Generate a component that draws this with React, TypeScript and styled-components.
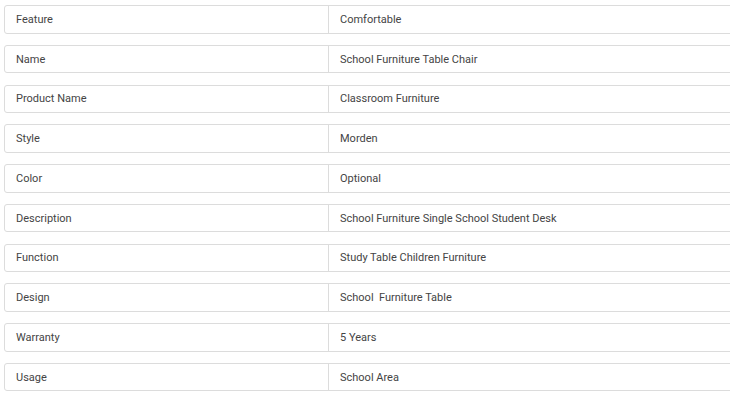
import React from "react";
import styled, { createGlobalStyle } from "styled-components";

const Global = createGlobalStyle`
  html, body { margin: 0; padding: 0; background: #fff; overflow: hidden; }
  body { font-family: Roboto, "Liberation Sans", sans-serif; }
`;

const List = styled.div`
  display: flex;
  flex-direction: column;
  gap: 11.28px;
  padding: 5px 0 0 4px;
  width: 760px;
`;

const Row = styled.div`
  display: grid;
  grid-template-columns: 323px 1fr;
  height: 28.5px;
  box-sizing: border-box;
  border: 1px solid #dcdcdc;
  border-radius: 3px;
`;

const Cell = styled.div<{ $divider?: boolean }>`
  display: flex;
  align-items: center;
  padding-left: 11px;
  font-size: 11px;
  color: #444;
  border-left: ${(p) => (p.$divider ? "1px solid #dcdcdc" : "none")};
  white-space: pre;
`;

const data: [string, string][] = [
  ["Feature", "Comfortable"],
  ["Name", "School Furniture Table Chair"],
  ["Product Name", "Classroom Furniture"],
  ["Style", "Morden"],
  ["Color", "Optional"],
  ["Description", "School Furniture Single School Student Desk"],
  ["Function", "Study Table Children Furniture"],
  ["Design", "School  Furniture Table"],
  ["Warranty", "5 Years"],
  ["Usage", "School Area"],
];

export default function App() {
  return (
    <>
      <Global />
      <List>
        {data.map(([k, v]) => (
          <Row key={k}>
            <Cell>{k}</Cell>
            <Cell $divider>{v}</Cell>
          </Row>
        ))}
      </List>
    </>
  );
}
